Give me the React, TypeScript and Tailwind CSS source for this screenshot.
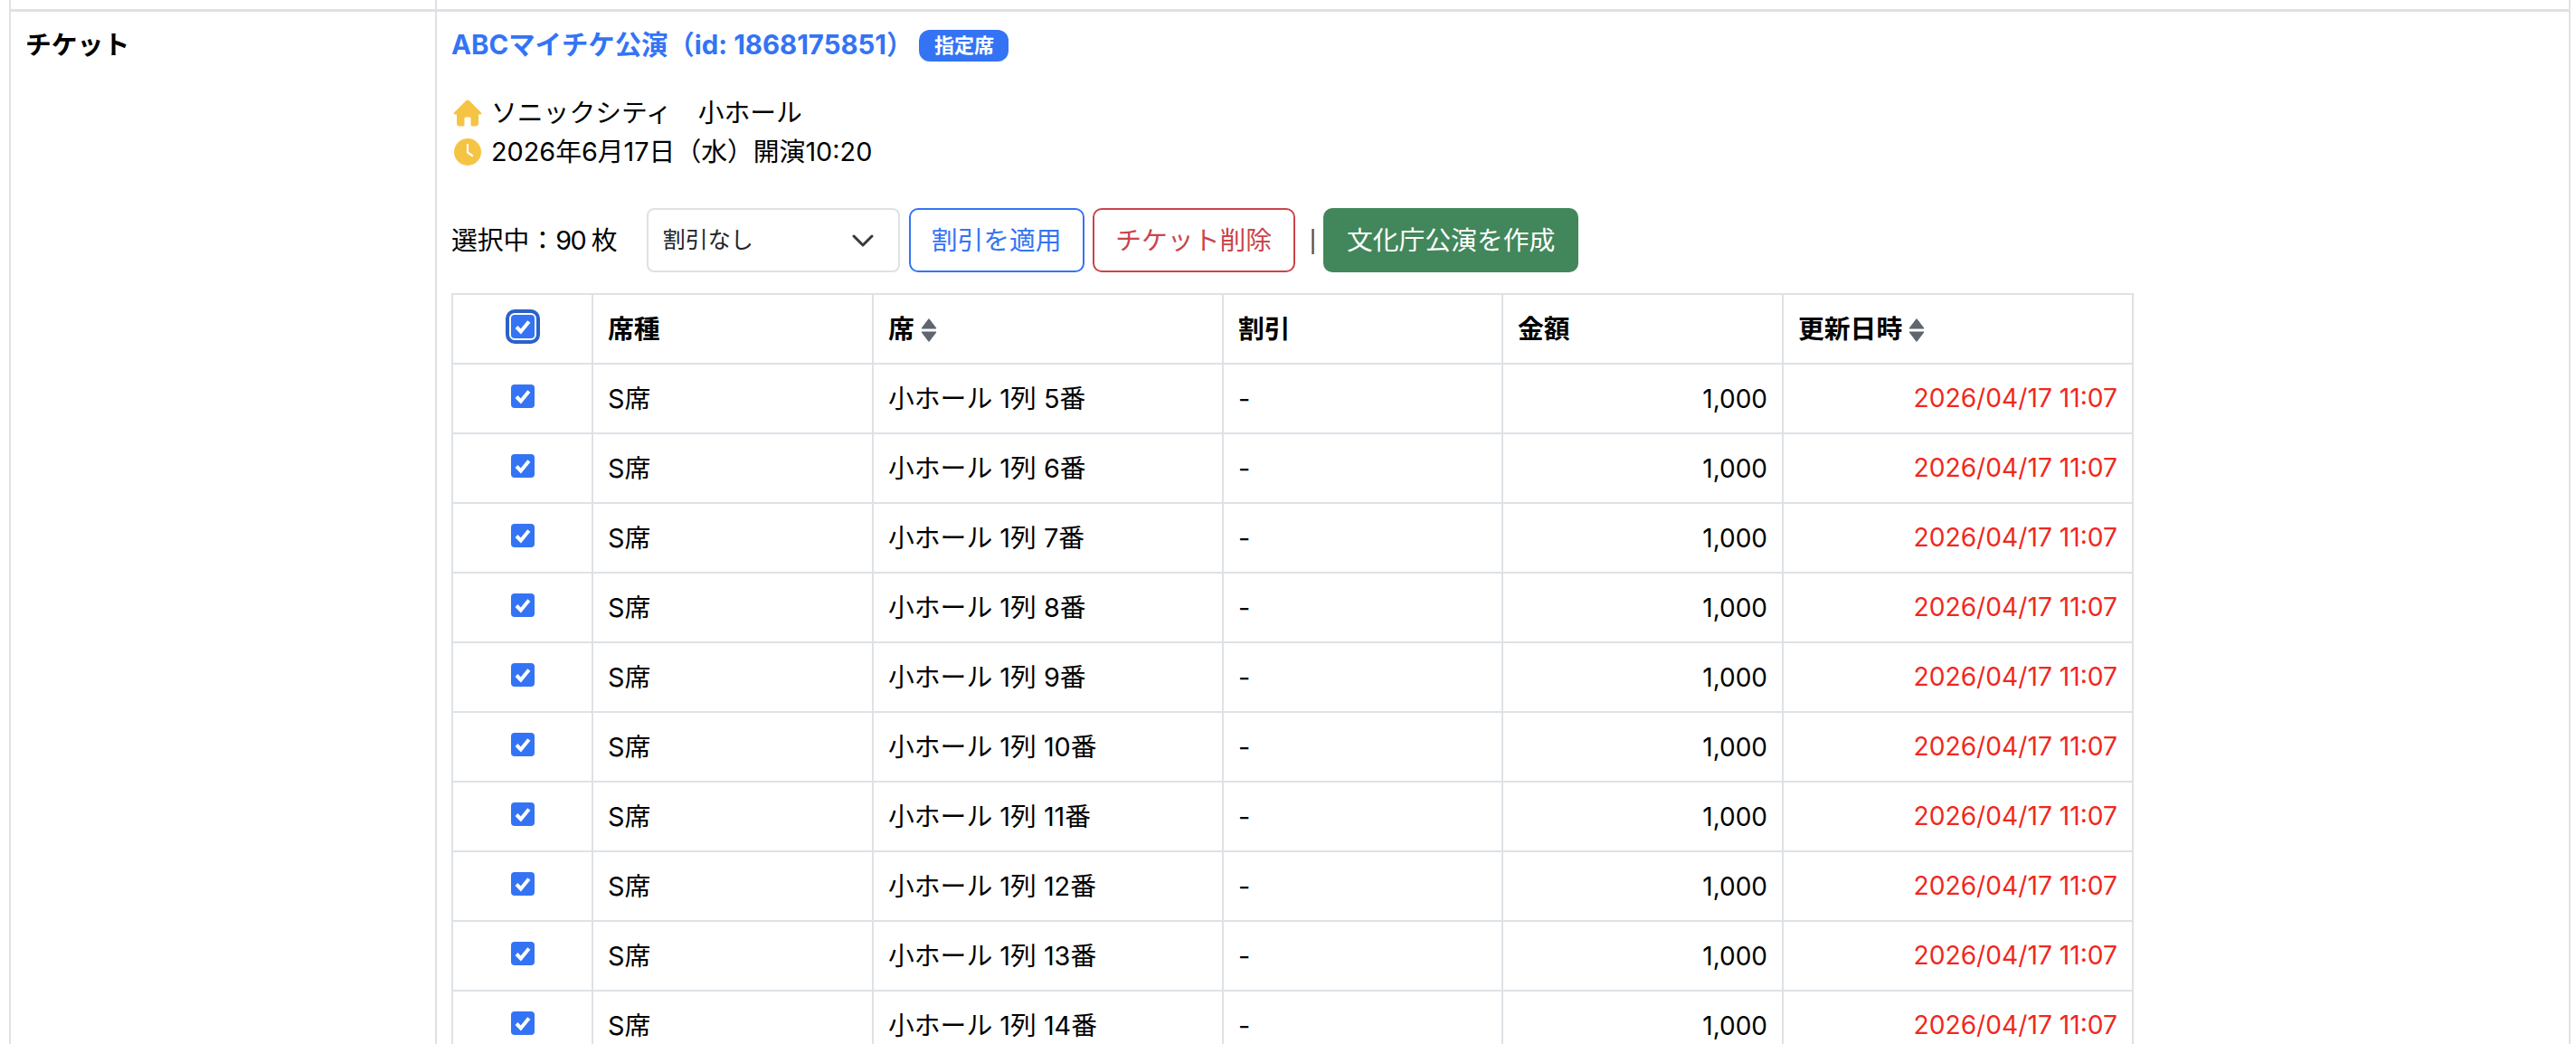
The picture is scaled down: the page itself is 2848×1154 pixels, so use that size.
const font = "font-['Inter','Noto_Sans_CJK_JP',sans-serif]";

const rows = ["5", "6", "7", "8", "9", "10", "11", "12", "13", "14"];

const CheckBox = ({ focused }: { focused?: boolean }) => (
	<span
		className={`inline-flex h-[26px] w-[26px] items-center justify-center rounded-[4px] bg-[#3474f4] ${
			focused ? "outline-[4px] outline-offset-[2px] outline-[#2a62c8]" : ""
		}`}
	>
		<svg viewBox="0 0 26 26" className="h-[26px] w-[26px]">
			<path d="M6 13.500l4.800 5 9-11" fill="none" stroke="#fff" strokeWidth="4" />
		</svg>
	</span>
);

const SortIcon = () => (
	<svg viewBox="0 0 20 28" className="ml-[6px] inline-block h-[28px] w-[20px] align-[-5px]">
		<path d="M10 1.500l8 10.500H2z" fill="#5f666d" stroke="#5f666d" strokeLinejoin="round" />
		<path d="M10 26.500L2 16h16z" fill="#5f666d" stroke="#5f666d" strokeLinejoin="round" />
	</svg>
);

const Th = ({ children, cls = "text-left" }: { children?: React.ReactNode; cls?: string }) => (
	<th className={`border-[2px] border-[#dee2e6] px-[16px] py-0 text-[28.8px] font-bold ${cls}`}>{children}</th>
);

const Td = ({ children, cls = "text-[28.8px]" }: { children?: React.ReactNode; cls?: string }) => (
	<td className={`border-[2px] border-[#dee2e6] px-[16px] py-0 font-normal ${cls}`}>{children}</td>
);

export default function App() {
	return (
		<div className={`h-[1154px] w-[2848px] overflow-hidden bg-white pl-[10px] pr-[6px] text-black ${font}`}>
			<div className="grid h-[10px] grid-cols-[471px_1fr] border-x-[2px] border-[#dee2e6]">
				<div className="border-r-[2px] border-[#dee2e6]" />
				<div />
			</div>
			<div className="grid grid-cols-[471px_1fr] border-x-[2px] border-t-[3px] border-[#dee2e6]">
				<div className="border-r-[2px] border-[#dee2e6] pl-[16px] pt-[16px] text-[28.8px] font-bold leading-[42px]">チケット</div>
				<div className="pl-[16px] pt-[16px]">
					<div className="flex h-[42px] items-center">
						<a className="text-[29.400px] font-bold text-[#3474f4]">ABCマイチケ公演（id: 1868175851）</a>
						<span className="ml-[7px] flex h-[35px] w-[99px] items-center justify-center rounded-[12px] bg-[#3474f4] text-[22px] font-bold text-white">
							指定席
						</span>
					</div>
					<div className="mt-[32px] flex h-[44px] items-center text-[28.8px]">
						<svg viewBox="0 0 32 30" className="ml-[2px] mr-[10px] h-[30px] w-[32px] shrink-0">
							<path
								d="M16 0.500c.7 0 1.300.3 1.800.8l13 13c.8.9.3 2.200-.9 2.200H28v10c0 1.700-1.300 3-3 3h-4c-.8 0-1.500-.7-1.500-1.500V21c0-.8-.7-1.500-1.500-1.500h-4c-.8 0-1.500.7-1.500 1.500v7c0 .8-.7 1.500-1.500 1.500H7c-1.700 0-3-1.300-3-3v-10H2.100c-1.200 0-1.700-1.300-.9-2.200l13-13c.5-.5 1.100-.8 1.800-.8z"
								fill="#f6c445"
							/>
						</svg>
						ソニックシティ　小ホール
					</div>
					<div className="flex h-[42px] items-center text-[28.8px]">
						<svg viewBox="0 0 30 30" className="ml-[3px] mr-[11px] h-[30px] w-[30px] shrink-0">
							<circle cx="15" cy="15" r="15" fill="#f6c445" />
							<path d="M15 7v8.500l5 3.500" fill="none" stroke="#fff" strokeWidth="2.200" strokeLinecap="round" />
						</svg>
						2026年6月17日（水）開演10:20
					</div>
					<div className="mt-[41px] flex items-center text-[28.8px]">
						<span className="mr-[32px]">
							選択中：<span className="tracking-[-1.500px]">90 </span>枚
						</span>
						<div className="flex h-[71px] w-[280px] items-center justify-between rounded-[8px] border-[2px] border-[#dee2e6] pl-[16px] pr-[27px] text-[25px] text-[#212529]">
							割引なし
							<svg viewBox="0 0 24 16" className="h-[16px] w-[24px]">
								<path d="M2 3l10 10 10-10" fill="none" stroke="#343a40" strokeWidth="3" strokeLinecap="round" strokeLinejoin="round" />
							</svg>
						</div>
						<button className="ml-[10px] flex h-[71px] w-[194px] items-center justify-center rounded-[10px] border-[2px] border-[#3474f4] text-[#3474f4]">
							割引を適用
						</button>
						<button className="ml-[9px] flex h-[71px] w-[224px] items-center justify-center rounded-[10px] border-[2px] border-[#cb444a] text-[#cb444a]">
							チケット削除
						</button>
						<span className="ml-[16px] font-['Liberation_Sans'] text-[#555]">|</span>
						<button className="ml-[8px] flex h-[71px] w-[282px] items-center justify-center rounded-[10px] bg-[#42875b] text-white">
							文化庁公演を作成
						</button>
					</div>
					<table className="mt-[23px] w-[1858px] table-fixed border-collapse">
						<colgroup>
							<col className="w-[155px]" />
							<col className="w-[310px]" />
							<col className="w-[387px]" />
							<col className="w-[309px]" />
							<col className="w-[310px]" />
							<col className="w-[387px]" />
						</colgroup>
						<thead>
							<tr className="h-[77px]">
								<Th cls="text-center">
									<CheckBox focused />
								</Th>
								<Th>席種</Th>
								<Th>
									席
									<SortIcon />
								</Th>
								<Th>割引</Th>
								<Th>金額</Th>
								<Th>
									更新日時
									<SortIcon />
								</Th>
							</tr>
						</thead>
						<tbody>
							{rows.map((n) => (
								<tr key={n} className="h-[77px]">
									<Td cls="text-center">
										<span className="inline-flex">
											<CheckBox />
										</span>
									</Td>
									<Td>S席</Td>
									<Td>小ホール 1列 {n}番</Td>
									<Td>-</Td>
									<Td cls="text-right text-[28px]">1,000</Td>
									<Td cls="text-right text-[28.200px] text-[#f0281e]">2026/04/17 11:07</Td>
								</tr>
							))}
						</tbody>
					</table>
				</div>
			</div>
		</div>
	);
}
